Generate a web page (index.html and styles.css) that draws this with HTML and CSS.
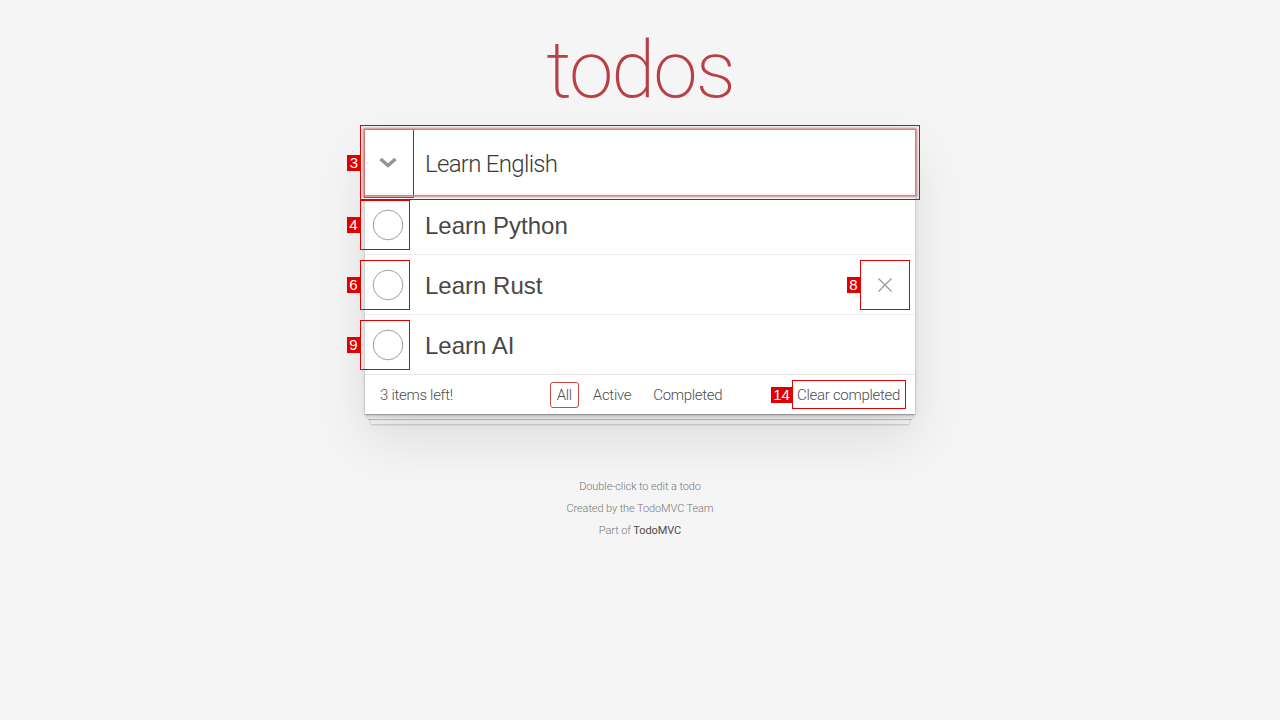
FILE: index.html
```html
<!DOCTYPE html>
<html lang="en">
<head>
<meta charset="utf-8">
<title>TodoMVC</title>
<link rel="stylesheet" href="styles.css">
</head>
<body>
<div class="page">
  <h1 class="title">todos</h1>
  <section class="todoapp">
    <header class="new-todo">
      <span class="toggle-all">
        <svg width="18" height="12" viewBox="0 0 18 12"><polyline points="1.5,2 9,8.5 16.5,2" fill="none" stroke="#949494" stroke-width="3.4"/></svg>
      </span>
      <span class="new-text">Learn English</span>
    </header>
    <ul class="todo-list">
      <li class="todo">
        <span class="toggle"><svg width="32" height="32" viewBox="0 0 32 32"><circle cx="16" cy="16" r="14.8" fill="none" stroke="#949494" stroke-width="0.9"/></svg></span>
        <span class="label">Learn Python</span>
      </li>
      <li class="todo">
        <span class="toggle"><svg width="32" height="32" viewBox="0 0 32 32"><circle cx="16" cy="16" r="14.8" fill="none" stroke="#949494" stroke-width="0.9"/></svg></span>
        <span class="label">Learn Rust</span>
        <span class="destroy"><svg width="16" height="16" viewBox="0 0 16 16"><path d="M1.5 1.5 L14.5 14.5 M14.5 1.5 L1.5 14.5" stroke="#949494" stroke-width="1.1" fill="none"/></svg></span>
      </li>
      <li class="todo">
        <span class="toggle"><svg width="32" height="32" viewBox="0 0 32 32"><circle cx="16" cy="16" r="14.8" fill="none" stroke="#949494" stroke-width="0.9"/></svg></span>
        <span class="label">Learn AI</span>
      </li>
    </ul>
    <footer class="footer">
      <span class="todo-count">3 items left!</span>
      <ul class="filters">
        <li><a class="filter selected">All</a></li>
        <li><a class="filter">Active</a></li>
        <li><a class="filter">Completed</a></li>
      </ul>
      <span class="clear-completed">Clear completed</span>
    </footer>
  </section>
  <footer class="info">
    <p>Double-click to edit a todo</p>
    <p>Created by the TodoMVC Team</p>
    <p>Part of <a class="info-link">TodoMVC</a></p>
  </footer>
</div>

<div class="marks">
  <div class="box box-3"></div>
  <div class="box box-3i"></div>
  <div class="tag tag-3">3</div>
  <div class="box box-4"></div>
  <div class="tag tag-4">4</div>
  <div class="box box-6"></div>
  <div class="tag tag-6">6</div>
  <div class="box box-8"></div>
  <div class="tag tag-8">8</div>
  <div class="box box-9"></div>
  <div class="tag tag-9">9</div>
  <div class="box box-14"></div>
  <div class="tag tag-14">14</div>
</div>
</body>
</html>
```

FILE: styles.css
```css
html, body {
  margin: 0;
  padding: 0;
}
body {
  background: #f5f5f5;
  color: #111;
  font-family: Roboto, "Liberation Sans", Arial, sans-serif;
  font-weight: 300;
  font-size: 14px;
}
.page {
  width: 550px;
  margin: 0 auto;
}
.title {
  margin: 0 0 20px 0;
  padding-top: 30px;
  height: 80px;
  line-height: 80px;
  font-size: 80px;
  font-weight: 200;
  letter-spacing: -2px;
  text-align: center;
  color: #b83f45;
}
.todoapp {
  position: relative;
  background: #fff;
  box-shadow: 0 2px 4px 0 rgba(0,0,0,0.2), 0 25px 50px 0 rgba(0,0,0,0.1);
}
.new-todo {
  display: flex;
  align-items: center;
  height: 65px;
  box-sizing: border-box;
  box-shadow: 0 0 2px 2px #cf7d7d, inset 0 -2px 1px rgba(0,0,0,0.03);
  position: relative;
  z-index: 1;
}
.toggle-all {
  width: 45px;
  display: flex;
  justify-content: center;
  align-items: center;
  padding-top: 1px;
}
.toggle-all svg { display: block; }
.new-text {
  padding-left: 15px;
  padding-top: 2px;
  font-size: 24px;
  font-weight: 300;
  letter-spacing: -0.7px;
  color: #3a3a3a;
}
.todo-list {
  list-style: none;
  margin: 0;
  padding: 0;
}
.todo {
  display: flex;
  align-items: center;
  height: 59px;
  border-bottom: 1px solid #ededed;
}
.toggle {
  width: 46px;
  display: flex;
  justify-content: center;
  align-items: center;
}
.toggle svg { display: block; }
.label {
  margin-left: 14px;
  padding-top: 2px;
  font-family: "Liberation Sans", Arial, sans-serif;
  font-weight: 400;
  font-size: 24px;
  color: #484848;
}
.destroy {
  margin-left: auto;
  margin-right: 10px;
  width: 40px;
  height: 40px;
  display: flex;
  justify-content: center;
  align-items: center;
}
.destroy svg { display: block; }
.footer {
  position: relative;
  display: grid;
  grid-template-columns: 1fr auto 1fr;
  align-items: center;
  height: 20px;
  line-height: 18px;
  padding: 10px 15px 9px;
  border-top: 1px solid #e6e6e6;
  margin-top: -1px;
  font-size: 15px;
  letter-spacing: -0.3px;
  color: #4d4d4d;
}
.footer::before {
  content: "";
  position: absolute;
  left: 0;
  right: 0;
  bottom: 0;
  height: 50px;
  overflow: hidden;
  z-index: -1;
  box-shadow: 0 1px 1px rgba(0,0,0,0.2), 0 8px 0 -3px #f6f6f6, 0 9px 1px -3px rgba(0,0,0,0.2), 0 16px 0 -6px #f6f6f6, 0 17px 2px -6px rgba(0,0,0,0.2);
}
.todo-count {
  justify-self: start;
}
.filters {
  list-style: none;
  margin: -3px 0;
  padding: 0;
  display: flex;
  gap: 6px;
}
.filter {
  display: inline-block;
  padding: 3px 7px;
  line-height: 18px;
  border: 1px solid transparent;
  border-radius: 3px;
  color: #4d4d4d;
}
.filter.selected {
  border-color: #ce4646;
  padding: 3px 6px;
}
.clear-completed {
  justify-self: end;
}
.info {
  margin-top: 67px;
  text-align: center;
  font-size: 11px;
  letter-spacing: -0.1px;
  color: #777;
}
.info p {
  margin: 11px 0;
  line-height: 11px;
}
.info p:first-child { margin-top: 0; }
.info-link {
  font-weight: 400;
  color: #4d4d4d;
}

/* annotation overlay */
.marks {
  position: absolute;
  left: 0;
  top: 0;
  width: 1280px;
  height: 720px;
  pointer-events: none;
}
.box {
  position: absolute;
  border: 1px solid #e00000;
  box-sizing: border-box;
}
.tag {
  position: absolute;
  background: #e00000;
  color: #fff;
  font-family: "Liberation Sans", Arial, sans-serif;
  font-size: 15px;
  line-height: 16px;
  height: 16px;
  text-align: center;
  font-weight: 400;
}
.box-3 { left: 360px; top: 125px; width: 560px; height: 75px; }
.box-3i { left: 364px; top: 129px; width: 50px; height: 69px; }
.tag-3 { left: 347px; top: 155px; width: 14px; }
.box-4 { left: 360px; top: 200px; width: 50px; height: 50px; }
.tag-4 { left: 347px; top: 217px; width: 13px; }
.box-6 { left: 360px; top: 260px; width: 50px; height: 50px; }
.tag-6 { left: 347px; top: 277px; width: 13px; }
.box-8 { left: 860px; top: 260px; width: 50px; height: 50px; }
.tag-8 { left: 847px; top: 277px; width: 13px; }
.box-9 { left: 360px; top: 320px; width: 50px; height: 50px; }
.tag-9 { left: 347px; top: 337px; width: 13px; }
.box-14 { left: 792px; top: 380px; width: 114px; height: 29px; }
.tag-14 { left: 771px; top: 387px; width: 21px; }
```
